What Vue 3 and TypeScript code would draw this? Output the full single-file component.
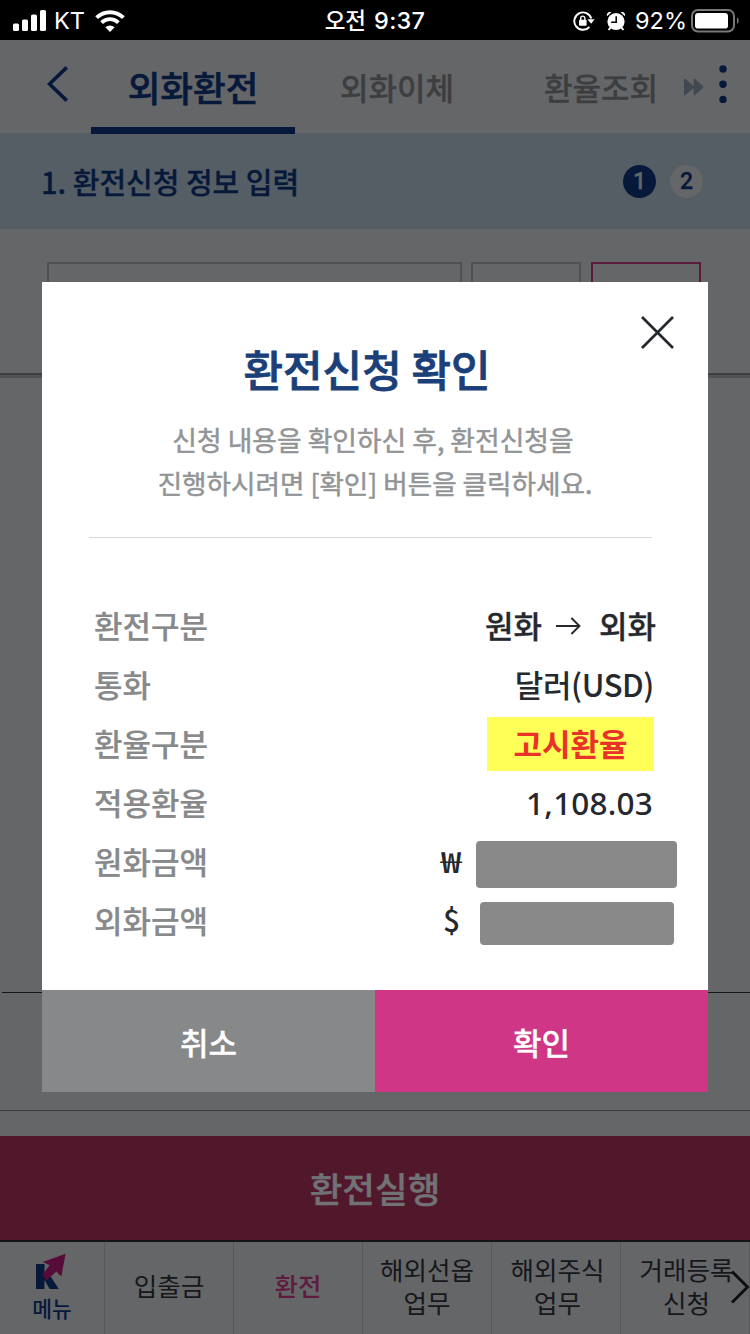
<script setup lang="ts">
interface Row {
  label: string
  value: string
  kind: 'arrow' | 'text' | 'hot' | 'rate' | 'won' | 'usd'
}

const rows: Row[] = [
  { label: '환전구분', value: '원화', kind: 'arrow' },
  { label: '통화', value: '달러(USD)', kind: 'text' },
  { label: '환율구분', value: '고시환율', kind: 'hot' },
  { label: '적용환율', value: '1,108.03', kind: 'rate' },
  { label: '원화금액', value: '₩', kind: 'won' },
  { label: '외화금액', value: '$', kind: 'usd' },
]

const navItems: { text: string; active?: boolean }[] = [
  { text: '입출금' },
  { text: '환전', active: true },
  { text: '해외선옵\n업무' },
  { text: '해외주식\n업무' },
  { text: '거래등록\n신청' },
]
</script>

<template>
  <div class="screen">
    <div class="status">
      <div class="status-left">
        <svg width="34" height="22" viewBox="0 0 34 22" fill="#fff">
          <rect x="0" y="13.5" width="6" height="7.5" rx="1.6" />
          <rect x="9" y="9.5" width="6" height="11.5" rx="1.6" />
          <rect x="18" y="4.5" width="6" height="16.5" rx="1.6" />
          <rect x="27" y="0" width="6" height="21" rx="1.6" />
        </svg>
        <span class="carrier">KT</span>
        <svg class="wifi" width="30" height="22" viewBox="0 0 30 22" fill="none" stroke="#fff">
          <path d="M1.6 7.6A19.2 19.2 0 0 1 28.4 7.6" stroke-width="4" />
          <path d="M6.6 12.6A12 12 0 0 1 23.4 12.6" stroke-width="3.8" />
          <path d="M15 22L10.4 17.3A6.6 6.6 0 0 1 19.6 17.3Z" fill="#fff" stroke="none" />
        </svg>
      </div>
      <div class="clock"><span class="ampm">오전</span><span>9:37</span></div>
      <div class="status-right">
        <svg width="22" height="20" viewBox="0 0 22 20" fill="none" stroke="#fff">
          <path d="M16.4 16A8.7 8.7 0 1 1 18.3 7.5" stroke-width="1.9" />
          <path d="M14.4 8.2H21.6L18.1 12.8Z" fill="#fff" stroke="none" />
          <rect x="6" y="8.8" width="7.6" height="6" rx=".8" fill="#fff" stroke="none" />
          <path d="M7.7 9V7.2a2.1 2.1 0 0 1 4.2 0V9" stroke-width="1.4" />
        </svg>
        <svg class="alarm" width="20" height="20" viewBox="0 0 20 20">
          <path d="M5 16L2.6 19M15 16L17.4 19" stroke="#fff" stroke-width="2" />
          <circle cx="10" cy="10.5" r="8.6" fill="#fff" />
          <path d="M1 5.2C.2 2.4 2.6.4 5.4 1.2ZM19 5.2C19.8 2.4 17.4.4 14.6 1.2Z" fill="#fff" />
          <path d="M10.2 5.2V11.2H5.2" fill="none" stroke="#000" stroke-width="1.5" />
        </svg>
        <span class="percent">92%</span>
        <svg width="48" height="24" viewBox="0 0 48 24">
          <rect x="1" y="1" width="42" height="21.5" rx="6" fill="none" stroke="#77787a" stroke-width="2" />
          <rect x="4" y="4" width="33" height="15.6" rx="3.2" fill="#fff" />
          <path d="M46 8.2C48.2 9.6 48.2 13.6 46 15Z" fill="#77787a" />
        </svg>
      </div>
    </div>

    <header class="head">
      <svg class="back" width="22" height="36" viewBox="0 0 22 36">
        <path d="M19.8 1.4L2.5 18L19.8 34.6" fill="none" stroke="#07193a" stroke-width="3.6" />
      </svg>
      <div class="tab on">외화환전</div>
      <div class="tab">외화이체</div>
      <div class="tab">환율조회</div>
      <svg class="ff" width="20" height="18" viewBox="0 0 20 18" fill="#424852">
        <path d="M0 1.5Q0 0 1.5 1L9.6 8L9.6 1.5Q9.6 0 11 1L18.6 7.8Q19.8 9 18.6 10.2L11 17Q9.6 18 9.6 16.5V10L1.5 17Q0 18 0 16.5Z" />
      </svg>
      <svg class="more" width="8" height="40" viewBox="0 0 8 40" fill="#07193a">
        <circle cx="4" cy="5" r="3.7" /><circle cx="4" cy="20.2" r="3.7" /><circle cx="4" cy="35.4" r="3.7" />
      </svg>
    </header>

    <section class="step">
      <span class="step-title">1. 환전신청 정보 입력</span>
      <span class="dot current">1</span>
      <span class="dot">2</span>
    </section>

    <section class="fields">
      <div class="field wide"></div>
      <div class="field"></div>
      <div class="field pink"></div>
    </section>
    <section class="panel"></section>
    <section class="panel-low"></section>
    <button class="execute">환전실행</button>

    <nav class="nav">
      <div class="nav-item menu">
        <svg width="32" height="37" viewBox="0 0 32 37">
          <path d="M1 11H9.5V22L14 21L23.8 36H14.7L9.5 27V36H1Z" fill="#07193a" />
          <path d="M30.6.8L26.3 23.4L21.4 18.5L11.8 27.2L7.2 21.8L14.6 12.3L7.8 9Z" fill="#570b38" />
        </svg>
        <span>메뉴</span>
      </div>
      <div v-for="item in navItems" :key="item.text" class="nav-item" :class="{ active: item.active }">
        <span>{{ item.text }}</span>
      </div>
      <svg class="next" width="20" height="34" viewBox="0 0 20 34">
        <path d="M2 1.5L17.5 17L2 32.5" fill="none" stroke="#0d0f12" stroke-width="3" />
      </svg>
    </nav>

    <div class="modal">
      <svg class="close" width="33" height="33" viewBox="0 0 33 33">
        <path d="M1 1L32 32M32 1L1 32" stroke="#25282c" stroke-width="2.7" />
      </svg>
      <h1>환전신청 확인</h1>
      <p class="desc"><span class="first">신청 내용을 확인하신 후, 환전신청을</span><br />진행하시려면 [확인] 버튼을 클릭하세요.</p>
      <div class="rule"></div>
      <dl class="rows">
        <div v-for="row in rows" :key="row.label" class="row">
          <dt>{{ row.label }}</dt>
          <dd :class="row.kind">
            <span class="val">{{ row.value }}</span>
            <template v-if="row.kind === 'arrow'">
              <svg class="arrow-icon" width="25" height="18" viewBox="0 0 25 18">
                <path d="M0 9H23.5M15.4 1L23.5 9L15.4 17" fill="none" stroke="#25282c" stroke-width="1.9" />
              </svg>
              <span class="val">외화</span>
            </template>
            <i v-if="row.kind === 'won' || row.kind === 'usd'" class="mask"></i>
          </dd>
        </div>
      </dl>
      <div class="actions">
        <button class="cancel">취소</button>
        <button class="ok">확인</button>
      </div>
    </div>
  </div>
</template>

<style>
body { background: #656668; }
</style>

<style scoped>
* { box-sizing: border-box; }
.screen {
  position: relative;
  width: 750px;
  height: 1334px;
  overflow: hidden;
  display: flex;
  flex-direction: column;
  background: #656668;
  font-family: "Noto Sans CJK KR", sans-serif;
  font-weight: 500;
  white-space: nowrap;
}
button { border: 0; padding: 0; font-family: inherit; }
svg { display: block; flex: none; }
.status {
  height: 40px;
  flex: none;
  background: #000;
  color: #fff;
  display: grid;
  grid-template-columns: 1fr auto 1fr;
  align-items: center;
  font-family: Inter, "Noto Sans CJK KR", sans-serif;
}
.status-left { display: flex; align-items: center; padding-left: 13px; }
.carrier { font-size: 23.5px; font-weight: 400; margin-left: 7px; line-height: 40px; padding-top: 1px; }
.wifi { margin-left: 10px; }
.clock { display: flex; gap: 8px; font-size: 23.5px; font-weight: 500; line-height: 40px; letter-spacing: .3px; padding-top: 1px; }
.ampm { font-family: "Noto Sans CJK KR", sans-serif; font-size: 22.5px; letter-spacing: 0; line-height: 37px; }
.status-right { display: flex; align-items: center; justify-content: flex-end; padding-right: 11px; }
.alarm { margin-left: 11px; }
.percent { font-size: 23.5px; font-weight: 400; margin: 0 4px 0 9px; line-height: 40px; padding-top: 1px; }

.head { height: 93px; flex: none; display: flex; position: relative; z-index: 1; color: #3d3e40; }
.back { margin: 26px 0 0 47px; }
.tab { width: 204px; height: 94px; text-align: center; font-size: 31px; line-height: 93px; -webkit-text-stroke: .3px currentColor; }
.tab.on { margin-left: 22px; font-size: 35.5px; color: #07193a; border-bottom: 7px solid #07193a; -webkit-text-stroke: .6px currentColor; }
.ff { margin: 38px 0 0 -19px; }
.more { margin: 24px 0 0 15px; }

.step { height: 96px; flex: none; background: #555e64; display: flex; align-items: center; padding: 0 47px 0 41px; color: #07193a; }
.step-title { font-size: 29px; line-height: 90px; flex: 1; margin-top: -1px; -webkit-text-stroke: .3px currentColor; }
.dot { width: 33px; height: 33px; border-radius: 50%; background: #656668; text-align: center; font: 500 23px/33px Roboto, sans-serif; margin-left: 14px; -webkit-text-stroke: .3px currentColor; }
.dot.current { background: #07193a; color: #656668; }

.fields { height: 149px; flex: none; display: flex; align-items: flex-start; padding: 33px 0 0 47px; border-bottom: 3px solid #505153; box-shadow: inset 0 -2px #3f4042; }
.field { width: 110px; height: 80px; border: 2px solid #505153; margin-left: 10px; }
.field.wide { width: 415px; margin: 0 -1px 0 0; }
.field.pink { border-color: #5a1b3a; }
.panel { height: 615px; flex: none; border-bottom: 1px solid #15171a; margin-left: 2px; }
.panel-low { height: 118px; flex: none; border-bottom: 1px solid #3c3d40; }
.execute { margin-top: 25px; height: 104px; flex: none; background: #51182c; color: #717275; font-size: 35.5px; line-height: 104px; font-weight: 500; -webkit-text-stroke: .4px currentColor; }

.nav { position: relative; height: 94px; flex: none; border-top: 2px solid #141517; display: flex; color: #15171a; font-size: 25.5px; line-height: 33px; font-weight: 400; }
.nav-item { width: 129px; flex: none; border-right: 1px solid #58595b; display: flex; flex-direction: column; align-items: center; justify-content: center; padding-bottom: 7px; white-space: pre-line; text-align: center; }
.nav-item.menu { width: 105px; color: #07193a; font-size: 21.5px; justify-content: flex-start; padding: 11px 0 0; font-weight: 500; }
.menu svg { margin: 0 0 1px -3px; }
.nav-item.active { color: #5f1b3d; font-weight: 500; }
.nav-item:nth-child(n + 5) { padding-left: 3px; }
.next { position: absolute; right: 0; top: 28px; }

.modal { position: absolute; z-index: 2; left: 42px; top: 282px; width: 666px; height: 810px; background: #fff; display: flex; flex-direction: column; }
.close { position: absolute; right: 34px; top: 34px; }
h1 { margin: 54px 0 0; padding-right: 16px; text-align: center; font-size: 43px; line-height: 64px; font-weight: 500; color: #1b3f78; -webkit-text-stroke: .8px currentColor; }
.desc { margin: 18px 0 0; text-align: center; color: #929496; font-size: 26.6px; line-height: 43px; font-weight: 400; -webkit-text-stroke: .5px currentColor; }
.first { font-size: 26.8px; padding-right: 4px; }
.rule { height: 1px; margin: 33px 56px 0 47px; background: #d8d9da; }
.rows { margin: 57px 0 0; padding: 0 55px 0 52px; }
.row { height: 59px; display: flex; align-items: center; justify-content: space-between; font-size: 31px; line-height: 59px; color: #25282c; }
dt { color: #87898b; font-weight: 500; -webkit-text-stroke: .2px currentColor; }
dd { margin: 0; display: flex; align-items: center; -webkit-text-stroke: .3px currentColor; }
dd.arrow { margin-right: -3px; }
.arrow-icon { margin: 3px 18px 0 14px; }
dd.text { letter-spacing: -.4px; margin-right: -1px; -webkit-text-stroke: 0; }
dd.hot { width: 167px; height: 54px; margin: 2px -1px 0 0; justify-content: center; background: #ffff57; color: #e8322a; font-weight: 700; line-height: 52px; -webkit-text-stroke: 0; }
dd.hot .val { margin-top: -2px; }
dd.rate { font-family: "Noto Sans", sans-serif; font-size: 31.5px; letter-spacing: .2px; padding-top: 2px; -webkit-text-stroke: 0; }
dd.won, dd.usd { -webkit-text-stroke: 0; }
dd.won { font-size: 29px; }
dd.won .val { transform: scaleX(1.25); transform-origin: right; }
dd.usd { font-size: 30px; font-weight: 500; }
.mask { background: #898989; border-radius: 4px; }
.won .mask { width: 201px; height: 47px; margin: 7px -24px 0 14px; }
.usd .mask { width: 194px; height: 43px; margin: 7px -21px 0 20px; }
.actions { margin-top: auto; height: 102px; display: grid; grid-template-columns: 1fr 1fr; }
.actions button { color: #fff; font-size: 31px; font-weight: 500; -webkit-text-stroke: .3px #fff; }
.cancel { background: #878889; }
.ok { background: #cf3786; }
</style>
